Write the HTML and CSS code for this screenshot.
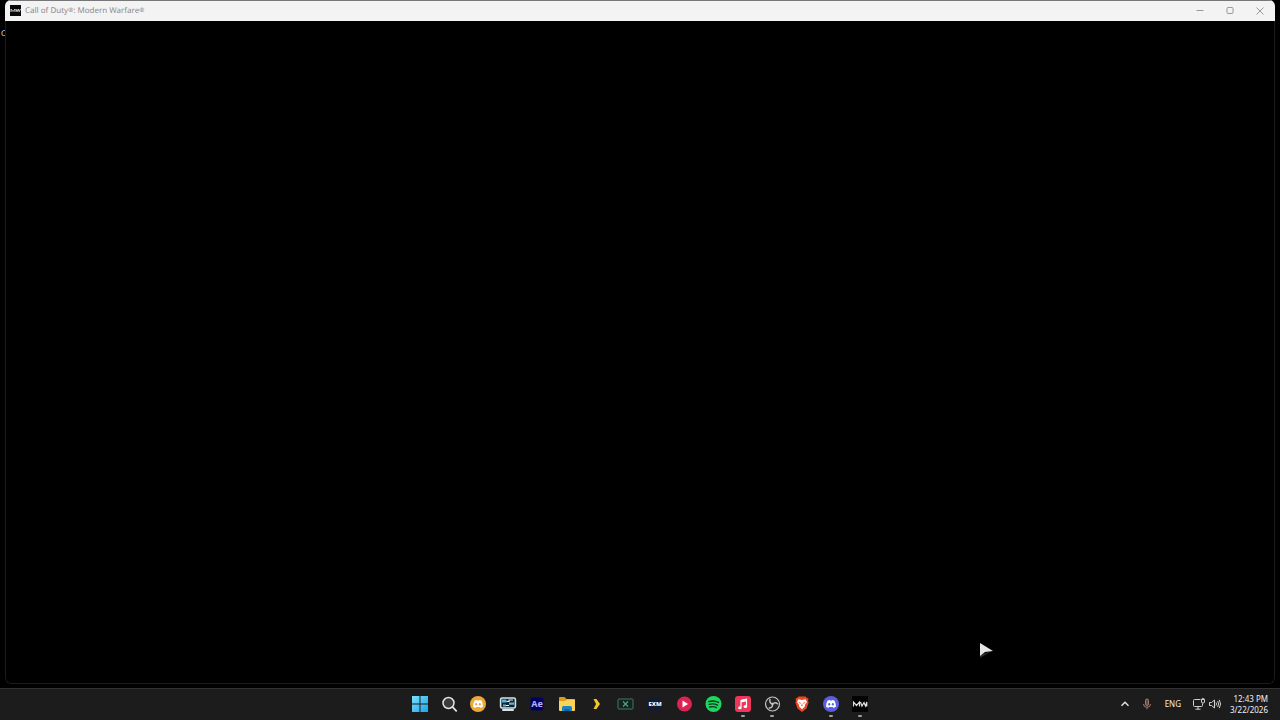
FILE: index.html
```html
<!DOCTYPE html>
<html lang="en">
<head>
    <meta charset="UTF-8">
    <meta name="viewport" content="width=device-width, initial-scale=1.0">
    <title>Desktop</title>
    <link rel="stylesheet" href="styles.css">
</head>
<body>
    <main class="desktop">
        <span class="desktop-label">C</span>
        <section class="window">
            <header class="titlebar">
                <svg class="app-icon" viewBox="0 0 12 12">
                    <rect x="1" width="11" height="11" fill="#080808"/>
                    <path d="M2 7V4L4 6.500 6 4V7M7 4L8 6.800 9.300 4 10.200 6.800 11.500 4" fill="none" stroke="#ddd" stroke-width="0.9"/>
                </svg>
                <h1 class="title">Call of Duty<span class="mark">®</span>: Modern Warfare<span class="mark">®</span></h1>
                <div class="controls">
                    <button class="control" aria-label="Minimize">
                        <svg viewBox="0 0 8 8"><path d="M0.500 3.500H7.500"/></svg>
                    </button>
                    <button class="control" aria-label="Maximize">
                        <svg viewBox="0 0 8 8"><rect x="1" y="0.500" width="6" height="6" rx="1"/></svg>
                    </button>
                    <button class="control" aria-label="Close">
                        <svg viewBox="0 0 8 8"><path d="M0.500 0.500L7.500 7.500M7.500 0.500L0.500 7.500"/></svg>
                    </button>
                </div>
            </header>
            <div class="screen"></div>
        </section>
        <svg class="cursor" viewBox="0 0 16 18">
            <path d="M1 13L13 9 1 16Z" fill="#2c2c2c"/>
            <path d="M1 1L14 9 6 10 1 14Z" fill="#e6e6e6"/>
        </svg>
    </main>

    <footer class="taskbar">
        <nav class="apps">
            <button class="app" aria-label="Start">
                <svg viewBox="0 0 18 18">
                    <defs>
                        <linearGradient id="win" x1="0" y1="0" x2="1" y2="1">
                            <stop offset="0" stop-color="#7be0fb"/>
                            <stop offset="1" stop-color="#1ba4ea"/>
                        </linearGradient>
                    </defs>
                    <path d="M1 1H8.500V8.500H1ZM9.500 1H17V8.500H9.500ZM1 9.500H8.500V17H1ZM9.500 9.500H17V17H9.500Z" fill="url(#win)"/>
                </svg>
            </button>
            <button class="app" aria-label="Search">
                <svg viewBox="0 0 18 18">
                    <circle cx="8.500" cy="8" r="5.500" fill="#3b3b3b" stroke="#e4e4e4" stroke-width="1.500"/>
                    <path d="M12.700 12.200L16.200 15.800" stroke="#e4e4e4" stroke-width="1.800" stroke-linecap="round"/>
                </svg>
            </button>
            <button class="app" aria-label="Discord Canary">
                <svg viewBox="0 0 18 18">
                    <circle cx="9" cy="9" r="8" fill="#eda937"/>
                    <path d="M5.600 5.500Q7 4.900 7.700 4.900L8 5.500H10L10.300 4.900Q11 4.900 12.400 5.500 14 8 14 11.500 12.600 12.700 11.300 12.800L10.700 11.900H7.300L6.700 12.800Q5.400 12.700 4 11.500 4 8 5.600 5.500Z" fill="#fff"/>
                    <ellipse cx="7.200" cy="9.300" rx="1" ry="1.200" fill="#eda937"/>
                    <ellipse cx="10.800" cy="9.300" rx="1" ry="1.200" fill="#eda937"/>
                </svg>
            </button>
            <button class="app" aria-label="System monitor">
                <svg viewBox="0 0 18 18">
                    <rect x="1.600" y="3" width="14.800" height="10" rx="1.500" fill="#10252f" stroke="#d3e3ea" stroke-width="1.600"/>
                    <path d="M3 4.500H7.500V7.500H3ZM10 7.500H15V9.800H10ZM4 9.500H7V11.500H4Z" fill="#5fb3da"/>
                    <path d="M7.500 6.500H10V5H14M7 10.500H10" fill="none" stroke="#e8f4fa" stroke-width="1.200"/>
                    <path d="M4 15H14" stroke="#d3e3ea" stroke-width="2" stroke-linecap="round"/>
                </svg>
            </button>
            <button class="app" aria-label="After Effects">
                <svg viewBox="0 0 18 18">
                    <rect x="2.500" y="2.500" width="13" height="13" rx="2" fill="#00005b"/>
                    <text class="ae" x="9" y="12" text-anchor="middle">Ae</text>
                </svg>
            </button>
            <button class="app" aria-label="File Explorer">
                <svg viewBox="0 0 18 18">
                    <path d="M1 3Q1 2 2 2H6.500L8.500 4H16Q17 4 17 5V10H1Z" fill="#d99b1c"/>
                    <path d="M1 6H7L9 4.500H16Q17 4.500 17 5.500V15Q17 16 16 16H2Q1 16 1 15Z" fill="#fcd356"/>
                    <path d="M4 16V12.500Q4 11 5.500 11H12.500Q14 11 14 12.500V16Z" fill="#1686c8"/>
                    <path d="M6.500 16V14H11.500V16Z" fill="#0e65a5"/>
                </svg>
            </button>
            <button class="app" aria-label="Launcher">
                <svg viewBox="0 0 18 18">
                    <path d="M6.500 4H9.500L13 9 9.500 14H6.500L9 9Z" fill="#f2c42a"/>
                </svg>
            </button>
            <button class="app" aria-label="Tuner">
                <svg viewBox="0 0 18 18">
                    <rect x="2" y="4" width="15" height="10" rx="1" fill="#14231f" stroke="#3d7965"/>
                    <path d="M7 6.500L12 11.500M12 6.500L7 11.500" stroke="#59a287" stroke-width="1.100"/>
                </svg>
            </button>
            <button class="app" aria-label="EXM">
                <svg viewBox="0 0 18 18">
                    <rect x="2" y="2" width="14" height="14" rx="1" fill="#151a2e"/>
                    <text class="exm" x="9" y="11" text-anchor="middle">EXM</text>
                </svg>
            </button>
            <button class="app" aria-label="Player">
                <svg viewBox="0 0 18 18">
                    <circle cx="9.500" cy="9" r="7.500" fill="#df2454"/>
                    <path d="M7.500 5.500L13 9 7.500 12.500Z" fill="#fff"/>
                </svg>
            </button>
            <button class="app" aria-label="Spotify">
                <svg viewBox="0 0 18 18">
                    <circle cx="9.500" cy="9" r="8" fill="#1ed760"/>
                    <path d="M4.700 6.600Q10 5 14.500 7.400M5.200 9.400Q9.500 8.100 13.500 10.100M5.600 12Q9.300 11 12.500 12.600" fill="none" stroke="#14351f" stroke-width="1.400" stroke-linecap="round"/>
                </svg>
            </button>
            <button class="app running" aria-label="Apple Music">
                <svg viewBox="0 0 18 18">
                    <rect x="1" y="1" width="16" height="16" rx="3" fill="#ee3658"/>
                    <path d="M7 12V5.500L12.500 4.300V11" fill="none" stroke="#fff" stroke-width="1.200"/>
                    <path d="M7 5L13 3.700V6.200L7 7.400Z" fill="#fff"/>
                    <ellipse cx="5.900" cy="12.700" rx="1.800" ry="1.500" fill="#fff"/>
                    <ellipse cx="11.400" cy="11.500" rx="1.800" ry="1.500" fill="#fff"/>
                </svg>
            </button>
            <button class="app running" aria-label="OBS Studio">
                <svg viewBox="0 0 18 18">
                    <circle cx="9.500" cy="9" r="7" fill="#232323" stroke="#c4c4c4" stroke-width="1.200"/>
                    <path d="M9.500 9Q6 8 7 4.500M9.500 9Q12 6.400 14.500 8.800M9.500 9Q10 12.800 6.300 13" fill="none" stroke="#c4c4c4" stroke-width="1.400" stroke-linecap="round"/>
                    <circle cx="9.500" cy="9" r="1.200" fill="#c4c4c4"/>
                </svg>
            </button>
            <button class="app" aria-label="Brave">
                <svg viewBox="0 0 18 18">
                    <path d="M5.500 1.500H12.500L14 3 15.500 3.500 15 6 15.600 7.500 13.500 13.500 9 17 4.500 13.500 2.400 7.500 3 6 2.500 3.500 4 3Z" fill="#ee4823"/>
                    <path d="M5.500 4.300L9 5 12.500 4.300 14 7 11.800 10 12 11.200 9 14.200 6 11.200 6.200 10 4 7Z" fill="#fff"/>
                    <path d="M5.300 7L7.800 7.700 7.300 9ZM12.700 7L10.200 7.700 10.700 9ZM9 8L9.700 10.800 9 11.500 8.300 10.800Z" fill="#ee4823"/>
                </svg>
            </button>
            <button class="app running" aria-label="Discord">
                <svg viewBox="0 0 18 18">
                    <circle cx="9" cy="9" r="8" fill="#5660e0"/>
                    <path d="M5.600 5.500Q7 4.900 7.700 4.900L8 5.500H10L10.300 4.900Q11 4.900 12.400 5.500 14 8 14 11.500 12.600 12.700 11.300 12.800L10.700 11.900H7.300L6.700 12.800Q5.400 12.700 4 11.500 4 8 5.600 5.500Z" fill="#fff"/>
                    <ellipse cx="7.200" cy="9.300" rx="1" ry="1.200" fill="#5660e0"/>
                    <ellipse cx="10.800" cy="9.300" rx="1" ry="1.200" fill="#5660e0"/>
                </svg>
            </button>
            <button class="app running" aria-label="Modern Warfare">
                <svg viewBox="0 0 18 18">
                    <rect x="1" y="1" width="16" height="16" fill="#020202"/>
                    <path d="M2.500 11.500V7L5.500 10.500 8.500 7V11.500M9.500 7L11 11 13 7.500 14.500 11L15.800 7V11.500" fill="none" stroke="#e0e0e0" stroke-width="1.200"/>
                </svg>
            </button>
        </nav>

        <div class="tray">
            <button class="tray-button" aria-label="Show hidden icons">
                <svg viewBox="0 0 14 14"><path d="M3.500 8.700L7 5.300 10.500 8.700" stroke="#e6e6e6" stroke-width="1.400"/></svg>
            </button>
            <button class="tray-button" aria-label="Microphone">
                <svg viewBox="0 0 14 14" stroke="#a77b74">
                    <rect x="5.500" y="2" width="3" height="6.500" rx="1.500" fill="#5c4844"/>
                    <path d="M3.500 7Q3.500 10.300 7 10.300 10.500 10.300 10.500 7M7 10.300V12.300"/>
                </svg>
            </button>
            <button class="language">ENG</button>
            <div class="status">
                <button class="tray-button" aria-label="Network">
                    <svg viewBox="0 0 14 14" stroke="#d0d0d0">
                        <path d="M8.500 2.500H2.500Q1.500 2.500 1.500 3.500V8.500Q1.500 9.500 2.500 9.500H9.500Q10.500 9.500 10.500 8.500V6.500M6 9.500V12M3.500 12.200H8.500"/>
                        <path d="M9.500 2.500H12.500V5Q12.500 6 11 6 9.500 6 9.500 5ZM10.300 1V2.500M11.700 1V2.500"/>
                    </svg>
                </button>
                <button class="tray-button" aria-label="Volume">
                    <svg viewBox="0 0 14 14" stroke="#d0d0d0">
                        <path d="M1.500 5.500H3.500L6.500 3V11L3.500 8.500H1.500ZM8 5.500Q9 7 8 8.500M9.700 4Q11.500 7 9.700 10M11.300 2.800Q13.800 7 11.300 11.200"/>
                    </svg>
                </button>
            </div>
            <button class="clock">
                <span>12:43 PM</span>
                <span>3/22/2026</span>
            </button>
        </div>
    </footer>
</body>
</html>
```
FILE: styles.css
```css
* {
    margin: 0;
    padding: 0;
    box-sizing: border-box;
}

body {
    display: flex;
    flex-direction: column;
    min-height: 100vh;
    background: #000;
    font-family: 'Noto Sans', 'Open Sans', sans-serif;
    text-rendering: geometricPrecision;
    overflow: hidden;
}

button {
    border: none;
    background: none;
    color: inherit;
    font: inherit;
}

svg {
    display: block;
}

.desktop {
    position: relative;
    flex: 1;
    display: flex;
    padding: 0 5px 4px;
}

.desktop-label {
    position: absolute;
    top: 28px;
    left: 1px;
    color: #ddd;
    font-size: 8px;
    line-height: 12px;
}

.window {
    position: relative;
    flex: 1;
    display: flex;
    flex-direction: column;
    border-radius: 6px;
    background: #000;
    overflow: hidden;
}

.titlebar {
    display: flex;
    align-items: center;
    height: 21px;
    padding-left: 4px;
    border-top: 1px solid #777;
    background: #f3f3f3;
    color: #8c8c8c;
}

.app-icon {
    width: 12px;
    height: 12px;
    margin-right: 4px;
}

.title {
    flex: 1;
    font-size: 8px;
    font-weight: 400;
    line-height: 12px;
}

.mark {
    font-size: 6px;
    line-height: 6px;
    vertical-align: 1px;
}

.controls {
    display: flex;
}

.control {
    display: flex;
    align-items: center;
    justify-content: center;
    width: 30px;
    height: 18px;
}

.control svg {
    width: 8px;
    height: 8px;
    fill: none;
    stroke: #999;
}

.screen {
    flex: 1;
    border: 1px solid #1c1c1c;
    border-top: none;
    border-radius: 0 0 6px 6px;
}

.cursor {
    position: absolute;
    top: 642px;
    left: 979px;
    width: 16px;
    height: 18px;
}

.taskbar {
    display: grid;
    grid-template-columns: 1fr 470px 1fr;
    height: 32px;
    padding-bottom: 1px;
    border-top: 1px solid #333;
    background: #1c1c1c;
    color: #f0f0f0;
}

.apps {
    grid-column: 2;
    display: grid;
    grid-template-columns: repeat(16, 1fr);
}

.app {
    position: relative;
    display: flex;
    align-items: center;
    justify-content: center;
}

.app svg {
    width: 18px;
    height: 18px;
}

.running::after {
    content: "";
    position: absolute;
    bottom: 2px;
    width: 4px;
    height: 2px;
    border-radius: 1px;
    background: #a0a0a0;
}

.ae {
    fill: #b5b0ff;
    font-size: 9px;
    font-weight: 700;
}

.exm {
    fill: #fff;
    font-size: 6px;
    font-weight: 800;
}

.tray {
    display: flex;
    align-items: center;
    justify-content: flex-end;
    gap: 8px;
    padding-right: 12px;
}

.tray-button svg {
    width: 14px;
    height: 14px;
    fill: none;
}

.language {
    margin: 0 3px;
    font-size: 8px;
    line-height: 12px;
}

.status {
    display: flex;
    gap: 2px;
}

.clock {
    display: flex;
    flex-direction: column;
    align-items: flex-end;
    font-size: 8px;
    line-height: 11px;
}
```
